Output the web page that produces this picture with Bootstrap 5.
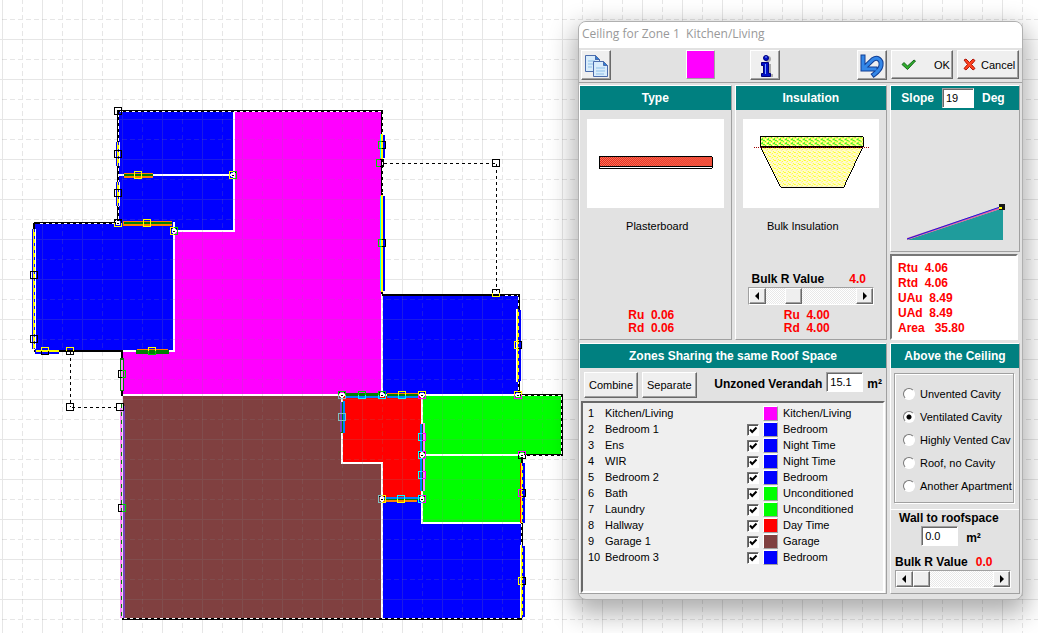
<!DOCTYPE html>
<html lang="en">
<head>
<meta charset="utf-8">
<meta name="viewport" content="width=device-width, initial-scale=1">
<title>Ceiling for Zone 1 Kitchen/Living</title>
<link href="https://cdn.jsdelivr.net/npm/bootstrap@5.3.0/dist/css/bootstrap.min.css" rel="stylesheet">
<style>
body{font-family:"Liberation Sans",Arial,sans-serif;font-size:11px;line-height:16px;color:#000;background:#fff}
.plan{width:100%;height:100%;position:absolute;inset:0}
.plan-area{overflow:hidden}
.dlg{position:absolute;left:578px;top:21px;width:445px;background:#e2e2e2;border:1px solid #b0b0b0;border-radius:8px;overflow:hidden;box-shadow:0 10px 26px 4px rgba(0,0,0,.32)}
.dlg-title{background:#fff;height:26px;font:12px/24px "Open Sans",sans-serif;color:#999;padding-left:3px;white-space:pre;margin:0}
.tools{height:35px;padding:2px 3px 0 2px;border-bottom:1px solid #a0a0a0;gap:4px}
.btn3{background:#efefef;border:1px solid;border-color:#fff #696969 #696969 #fff;box-shadow:inset -1px -1px 0 #a0a0a0;padding:0;color:#000;font-size:11px;line-height:16px;border-radius:0}
.sq{width:30px;height:30px}
.wide{width:62px;height:29px}
.zone-colour{width:29px;height:29px;background:#f0f;margin-left:71px;border-color:#fff #a0a0a0 #a0a0a0 #fff;box-shadow:none}
.info{margin-left:31px}
.panes{display:grid;grid-template-columns:1fr 1fr 130px;gap:3px;padding:2px 2px 5px 0}
.pane{border:1px solid;border-color:#fff #a0a0a0 #a0a0a0 #fff;min-width:0}
.pane h2{background:teal;color:#fff;height:24px;margin:0;font-size:12px;line-height:24px;font-weight:700;text-align:center;white-space:nowrap}
.top{height:255px}
.wide-pane{grid-column:span 2}
.bold12{font-size:12px;font-weight:700;line-height:16px;white-space:nowrap}
.red{color:#f00}
.rr{font-size:12px;font-weight:700;line-height:13px;color:#f00;white-space:pre;text-align:center;margin:0}
.sample{background:#fff;height:89px;margin:9px 7px 10px;display:block}
.field{border:1px solid;border-color:#a0a0a0 #fff #fff #a0a0a0;box-shadow:inset 1px 1px 0 #696969;background:#fff;height:20px;width:37px;padding:0 3px;font:11px/16px "Liberation Sans",sans-serif;color:#000;border-radius:0}
.field.deg{width:32px}
.results{border:2px solid;border-color:#777 #fff #fff #777;background:#fff;height:86px;margin:2px 2px 0 0;padding:5px 0 0 6px;font-size:12px;line-height:15px;font-weight:700;color:#f00;white-space:pre}
.scroller{border:1px solid;border-color:#a0a0a0 #fff #fff #a0a0a0;height:18px}
.bulk-row{margin:0 12px}
.scroller button{width:17px;height:16px;line-height:0}
.scroller input{flex:1;min-width:0;height:16px;margin:0;-webkit-appearance:none;appearance:none;background:repeating-conic-gradient(#fff 0 25%,#e8e8e8 0 50%) 0 0/2px 2px}
.scroller input::-webkit-slider-thumb{-webkit-appearance:none;width:17px;height:16px;background:#efefef;border:1px solid;border-color:#fff #696969 #696969 #fff;box-shadow:inset -1px -1px 0 #a0a0a0}
.list{border:2px solid;border-color:#696969 #fff #fff #696969;background:#efefef;height:192px;margin:3px 1px 0;padding:2px 0 0 5px}
.list table{width:100%;table-layout:fixed}
.list td{height:16px;padding:0;line-height:16px;white-space:nowrap}
.tick{appearance:none;-webkit-appearance:none;width:12px;height:12px;margin:2px 0 0;display:block;border:1px solid;border-color:#777 #fff #fff #777;box-shadow:inset 1px 1px 0 #555;background:#fff}
.tick:checked{background:#fff url("data:image/svg+xml,%3Csvg xmlns='http://www.w3.org/2000/svg' viewBox='0 0 10 10'%3E%3Cpath d='M2 4.5l2.2 2.5 4.3-4.500' fill='none' stroke='%23000' stroke-width='2'/%3E%3C/svg%3E")}
.chip{display:block;width:15px;height:15px;border:1px solid;border-color:#fff #a0a0a0 #a0a0a0 #fff}
.c-kit{background:#f0f}.c-bed{background:#00f}.c-un{background:#0f0}.c-day{background:#f00}.c-gar{background:#804040}
.group{border:1px solid #a0a0a0;box-shadow:inset 1px 1px 0 #fff,1px 1px 0 #fff;margin:5px 5px 6px 3px;padding:8px 0 5px 8px}
.group label{height:23px;white-space:nowrap;gap:5px;overflow:hidden}
.dot{appearance:none;-webkit-appearance:none;width:12px;height:12px;flex:none;margin:0;border:1px solid;border-color:#777 #fff #fff #777;border-radius:50%;background:#fff}
.dot:checked{background:radial-gradient(circle,#000 0 2px,#fff 3px)}
</style>
</head>
<body>
<main class="plan-area position-relative vh-100">
<svg class="plan" role="img" aria-label="Floor plan" shape-rendering="crispEdges" fill="none">
<defs>
<pattern id="grid" x="2" y="39" width="40" height="40" patternUnits="userSpaceOnUse">
<path d="M.5 0V40M1 .5H40" stroke="#808080" stroke-opacity=".2"/>
<path d="M20.500 0V40M0 20.500H40" stroke="#808080" stroke-opacity=".2" stroke-dasharray="5 3"/>
</pattern>
</defs>
<path fill="#f0f" d="M123 112H381V394H123z"/>
<path fill="#00f" d="M119 112H233V230H119zM35 223H173V350H35zM383 296H518V394H383zM383 500H521V618H383z"/>
<path fill="#804040" d="M123 396H381V618H123z"/>
<path fill="#f00" d="M343 396H421V499H383V462H343z"/>
<path fill="#0f0" d="M423 396H561V454H423zM423 456H521V522H423z"/>
<path stroke="#fff" stroke-width="2" d="M119 175H234M234 112V231H174M174 222V351H122M382 296V396M123 395H520M342 395V463H382V618M422 395V523H521M422 455H521"/>
<rect width="100%" height="100%" fill="url(#grid)"/>
<g stroke="#000" stroke-width="2">
<path d="M117 111H383M34 223H118M118 112V223M382 111V294M382 295H519V395M518 395H562V455H522V618M122 619H522M34 351H122V396M34 223V230"/>
</g>
<path stroke="#fff" stroke-dasharray="3 3" d="M120 111.500H382M40 223.500H116M118.500 114V222M382.500 114V193M505 295.500H518M518.500 297V393M522 395.500H561M561.500 397V454M524 455.500H561M521.500 524V617M124 618.500H520"/>
<path stroke="#000" stroke-dasharray="3 3" d="M384 163.500H496M496.500 164V291M70.500 352V407M72 407.500H120"/>
<g>
<path stroke="#00f" stroke-width="5" d="M118.500 142V166M118.500 182V206M34.500 229V349M35 351.500H59"/>
<path stroke="#fff" d="M119.500 142V166M119.500 182V206M35.500 229V349"/>
<path stroke="#ff0" stroke-width="2" d="M118 142V166M118 182V206M34 229V349M36 351H59"/>
<path stroke="#00f" stroke-dasharray="3 4" d="M118.500 142V166M118.500 182V206M34.500 229V349"/>
<path stroke="#0ff" d="M380.500 134V158M380.500 196V291"/>
<path stroke="#00f" stroke-width="2" d="M384 135V158M384 196V291M520 310V381M524 463V523M524 546V617"/>
<path stroke="#ff0" stroke-width="2" d="M382 134V160M382 195V292M518 309V382M522 463V523M522 545V618"/>
<path stroke="#fff" d="M516.500 309V382M520.500 545V618"/>
<path stroke="#f00" d="M520.500 463V523"/>
<path stroke="#00f" stroke-dasharray="3 4" d="M518.500 309V382M522.500 463V523M522.500 545V618"/>
</g>
<g stroke="#ff8000" stroke-width="5"><path d="M124 175.500H153M123 223.500H172"/><path stroke-width="2" d="M137 350H168M387 394H418M383 501H417"/></g>
<g stroke="#008000" stroke-width="2"><path d="M124 175H153M124 223H172M387 395H418M342 402V433M422 424V451M422 459V491M383 499H420"/><path stroke-width="4" d="M136 352H169M122 358V391"/><path stroke-width="3" d="M345 394.500H380"/></g>
<path stroke="#0080ff" stroke-width="2" d="M345 397H380M387 397H418M344 401V433M420.500 424V451M420.500 459V491M383 497.500H420"/>
<path stroke="#ff80ff" stroke-width="2" d="M122 360V390M424 423V451M424 459V491M121 408V618"/>
<path stroke="#8040c0" stroke-width="2" d="M124 406V618M340.500 402V432"/>
<path stroke="#008000" stroke-dasharray="4 4" d="M121.500 404V618"/>
<g id="handles"></g>
</svg>

<section class="dlg" role="dialog" aria-labelledby="dlgTitle">
<h1 class="dlg-title" id="dlgTitle">Ceiling for Zone 1  Kitchen/Living</h1>
<div class="tools d-flex">
<button class="btn3 sq" aria-label="Copy"><svg width="25" height="25" viewBox="0 0 25 25" fill="#d8ecfb" stroke="#4b6dad"><path d="M1.500 2.500h10l4 4v12h-14zM11.500 2.500v4h4"/><path d="M11.500 2.500v4h4z" fill="#2f7fd6"/><path d="M4 8h7M4 11h5M4 14h4" stroke="#8dbfe8"/><path d="M9.500 8.500h10l4 4v11h-14z"/><path d="M19.500 8.500v4h4z" fill="#2f7fd6"/><path d="M12 15h9M12 18h9M12 21h8" stroke="#8dbfe8"/></svg></button>
<button class="btn3 zone-colour" aria-label="Zone colour"></button>
<button class="btn3 sq info" aria-label="Information"><svg width="25" height="25" viewBox="0 0 25 25"><g fill="#aaa" transform="translate(2 1)"><circle cx="13" cy="5" r="3"/><path d="M8 10h8v10h2v3H8v-3h2v-7H8z"/></g><g fill="#0010c8" stroke="#00007c"><circle cx="13" cy="5" r="2.500"/><path d="M8.500 9.500h7v11h2v3h-9v-3h2v-8h-2z"/></g><path d="M12.500 11v10M12 4h2" stroke="#7da0ff"/></svg></button>
<button class="btn3 sq ms-auto" aria-label="Undo"><svg width="26" height="25" viewBox="0 0 26 25" fill="none"><path d="M4 4v12h12M5 15L14 6.500c4-3 9 0 8 6-.5 3-3 6-7 9" stroke="#123f94" stroke-width="5" stroke-linecap="square"/><path d="M4 4v12h12M5 15L14 6.500c4-3 9 0 8 6-.5 3-3 6-7 9" stroke="#3487e8" stroke-width="3" stroke-linecap="square"/></svg></button>
<button class="btn3 wide d-flex align-items-center"><svg class="ms-2 me-3" width="18" height="14" viewBox="0 0 18 14"><path d="M2 6.500l2-2 3.500 3.500L14 2l1.500 1L7.500 11.500z" fill="#2fae2b" stroke="#16651b"/></svg>OK</button>
<button class="btn3 wide d-flex align-items-center"><svg class="ms-1 me-1" width="15" height="15" viewBox="0 0 15 15"><path d="M2 3l2-1 3.500 3.500L11 2l2 1.500-3.500 4L13 11.500 11 13 7.500 9.500 4 13l-2-1.500 3.500-4z" fill="#ff4420" stroke="#b01408"/></svg>Cancel</button>
</div>
<div class="panes">
<section class="pane top d-flex flex-column">
<h2>Type</h2>
<svg class="sample" viewBox="0 0 137 89" shape-rendering="crispEdges"><defs><pattern id="brick" width="2" height="2" patternUnits="userSpaceOnUse"><path fill="#f01820" d="M0 0h2v2H0z"/><path fill="#f08858" d="M0 0h1v1H0zM1 1h1v1H1z"/></pattern></defs><path d="M12.500 37.500h113v12h-113z" fill="#fff" stroke="#000"/><path d="M12.500 37.500h113v10h-113z" fill="url(#brick)" stroke="#000"/></svg>
<div class="text-center ps-1">Plasterboard</div>
<p class="rr mt-auto pe-2">Ru  0.06</p><p class="rr mb-1 pe-2">Rd  0.06</p>
</section>
<section class="pane top d-flex flex-column">
<h2>Insulation</h2>
<svg class="sample" viewBox="0 0 137 89" shape-rendering="crispEdges"><defs><pattern id="batt" width="6" height="4" patternUnits="userSpaceOnUse"><path fill="#ffff60" d="M0 0h6v4H0z"/><path fill="#30f030" d="M0 0h2v1H0zM2 1h2v1H2zM4 2h1v1H4zM1 3h1v1H1z"/><path fill="#fff" d="M4 0h1v1H4zM0 2h1v1H0z"/></pattern><pattern id="wool" width="5" height="4" patternUnits="userSpaceOnUse"><path fill="#fffccc" d="M0 0h5v4H0z"/><path fill="#ffff20" d="M0 0h1v1H0zM1 1h2v1H1zM4 2h1v1H4z"/><path fill="#ffe6a0" d="M3 3h1v1H3z"/></pattern></defs><path d="M18 28.500h102l-19 40H38z" fill="url(#wool)" stroke="#000"/><path d="M17.500 17.500h103v10h-103z" fill="url(#batt)" stroke="#000"/><path d="M11 28.500h115" stroke="#a00000" stroke-dasharray="1 1"/></svg>
<div class="text-center pe-3">Bulk Insulation</div>
<div class="d-flex bold12 mt-auto bulk-row px-1"><label for="bulk">Bulk R Value</label><span class="red ms-auto pe-1">4.0</span></div>
<div class="scroller d-flex bulk-row"><button class="btn3" aria-label="Decrease"><svg width="13" height="12"><path d="M8 2v8L4 6z"/></svg></button><input type="range" id="bulk" value="26"><button class="btn3" aria-label="Increase"><svg width="13" height="12"><path d="M5 2v8l4-4z"/></svg></button></div>
<p class="rr mt-1 pe-2">Ru  4.00</p><p class="rr mb-1 pe-2">Rd  4.00</p>
</section>
<div class="top d-flex flex-column">
<section class="pane flex-grow-1 d-flex flex-column">
<h2 class="d-flex justify-content-center gap-2 pe-1"><label for="slope">Slope</label><input class="field deg my-auto" id="slope" value="19"><span>Deg</span></h2>
<svg class="mt-auto mb-2 ms-3" width="100" height="40" viewBox="0 0 100 40"><path d="M0 37L96 5v32z" fill="#1f9c9c"/><path d="M0 36L93 5" stroke="#e060a0" stroke-width="2"/><path d="M0 36L93 4" stroke="#1818e0" stroke-width="1"/><path d="M92 1h6v6h-6z" fill="#181818"/><path d="M92 4h3v2h-3z" fill="#ff0"/></svg>
</section>
<div class="results">Rtu  4.06
Rtd  4.06
UAu  8.49
UAd  8.49
Area   35.80</div>
</div>
<section class="pane wide-pane">
<h2>Zones Sharing the same Roof Space</h2>
<div class="d-flex ps-1 pt-1">
<button class="btn3 px-1 py-1">Combine</button><button class="btn3 px-1 py-1 ms-1">Separate</button>
<label class="bold12 ms-auto pt-1 pe-1" for="ver">Unzoned Verandah</label><input class="field" id="ver" value="15.1"><span class="bold12 pt-1 ps-1 pe-1">m²</span>
</div>
<div class="list"><table><colgroup><col style="width:17px"><col style="width:142px"><col style="width:16px"><col style="width:20px"><col></colgroup><tbody id="zones"></tbody></table></div>
</section>
<section class="pane">
<h2>Above the Ceiling</h2>
<div class="group">
<label class="d-flex align-items-center"><input class="dot" type="radio" name="above">Unvented Cavity</label>
<label class="d-flex align-items-center"><input class="dot" type="radio" name="above" checked>Ventilated Cavity</label>
<label class="d-flex align-items-center"><input class="dot" type="radio" name="above">Highly Vented Cav</label>
<label class="d-flex align-items-center"><input class="dot" type="radio" name="above">Roof, no Cavity</label>
<label class="d-flex align-items-center"><input class="dot" type="radio" name="above">Another Apartment</label>
</div>
<div class="border-top border-white">
<label class="bold12 d-block ps-2" for="wall">Wall to roofspace</label>
<div class="d-flex bold12 gap-2 justify-content-center pe-2"><input class="field" id="wall" value="0.0"><span class="pt-1">m²</span></div>
<div class="d-flex bold12 mt-2 ps-1 gap-2"><label for="bulk2">Bulk R Value</label><span class="red">0.0</span></div>
<div class="scroller d-flex ms-1 me-2"><button class="btn3" aria-label="Decrease"><svg width="13" height="12"><path d="M8 2v8L4 6z"/></svg></button><input type="range" id="bulk2" value="0"><button class="btn3" aria-label="Increase"><svg width="13" height="12"><path d="M5 2v8l4-4z"/></svg></button></div>
</div>
</section>
</div>
</section>
</main>
<script>
const zones=[["Kitchen/Living","Kitchen/Living","kit"],["Bedroom 1","Bedroom","bed"],["Ens","Night Time","bed"],["WIR","Night Time","bed"],["Bedroom 2","Bedroom","bed"],["Bath","Unconditioned","un"],["Laundry","Unconditioned","un"],["Hallway","Day Time","day"],["Garage 1","Garage","gar"],["Bedroom 3","Bedroom","bed"]];
document.getElementById("zones").innerHTML=zones.map(([n,t,c],i)=>`<tr><td>${i+1}</td><td><label for="z${i}">${n}</label></td><td>${i?`<input class="tick" type="checkbox" id="z${i}" checked>`:""}</td><td><span class="chip c-${c}"></span></td><td>${t}</td></tr>`).join("").replace('<label for="z0">Kitchen/Living</label>','Kitchen/Living');
// Node handles: centre x, centre y, first half colour, second half colour, split direction
const k="#000",y="#ff0",g="#00d000",m="#f0f",c="#0ff",s="#80c0c0";
const nodes=[[118,111,k,k],[118,154,k,k],[118,193,k,k],[118,223,k,y,"v"],[138,175,y,y],[147,223,y,y],[233,175,y,g],[174,231,y,g],[34,275,k,k],[34,339,k,k],[45,351,y,k,"v"],[70,351,y,k,"v"],[152,351,y,g,"v"],[122,374,k,g],[120,407,k,k],[70,407,k,k],[382,145,g,k],[380,163,g,k],[382,243,g,k],[496,163,k,k],[496,293,k,y,"v"],[518,345,y,k],[518,395,y,m,"v"],[342,395,g,s,"v"],[362,395,g,c,"v"],[382,395,g,c,"v"],[402,395,y,c,"v"],[422,395,y,m,"v"],[342,417,s,s],[422,437,c,m],[422,455,c,m],[422,475,c,m],[422,499,c,m],[382,499,s,y],[401,499,c,y,"v"],[522,455,m,k,"v"],[522,493,m,k],[522,581,y,k],[122,508,k,g]];
const corners=[[118,223],[233,175],[174,231],[342,395],[382,395],[422,395],[422,455],[422,499],[382,499],[522,455],[518,395]];
document.getElementById("handles").innerHTML=corners.map(([x,y])=>`<path fill="#fff" d="M${x-2} ${y-2}h4v4h-4z"/><path stroke="#000" stroke-dasharray="2 2" d="M${x-3} ${y-3}l6 6M${x+3} ${y-3}l-6 6"/>`).join("")+nodes.map(([x,y,a,b,d])=>{x-=3.5;y-=3.5;return d?`<path stroke="${a}" d="M${x} ${y+4}v-4h7v4"/><path stroke="${b}" d="M${x} ${y+3}v4h7v-4"/>`:`<path stroke="${a}" d="M${x+4} ${y}h-4v7h4"/><path stroke="${b}" d="M${x+3} ${y}h4v7h-4"/>`}).join("");
</script>
<script src="https://cdn.jsdelivr.net/npm/bootstrap@5.3.0/dist/js/bootstrap.bundle.min.js"></script>
</body>
</html>
